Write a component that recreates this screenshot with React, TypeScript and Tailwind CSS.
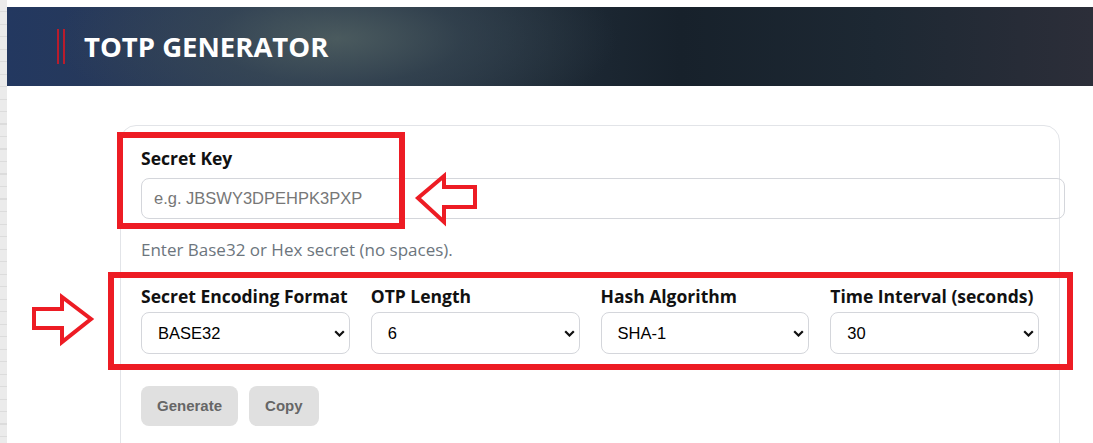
const selects = [
  { label: 'Secret Encoding Format', value: 'BASE32', options: ['BASE32', 'HEX'] },
  { label: 'OTP Length', value: '6', options: ['6', '7', '8'] },
  { label: 'Hash Algorithm', value: 'SHA-1', options: ['SHA-1', 'SHA-256', 'SHA-512'] },
  { label: 'Time Interval (seconds)', value: '30', options: ['30', '60'] },
]

function Chevron() {
  return (
    <svg width="11" height="7" viewBox="0 0 11 7" className="pointer-events-none absolute right-[5px] top-[18px]">
      <path d="M1.2 1.2 L5.5 5.5 L9.8 1.2" fill="none" stroke="#111" strokeWidth="2.2" />
    </svg>
  )
}

export default function App() {
  return (
    <div className="relative flex min-h-screen overflow-hidden bg-white font-['Open_Sans',sans-serif]">
      {/* grid strip on the left edge */}
      <div className="w-[7px] shrink-0 bg-[#ebebeb] bg-[repeating-linear-gradient(180deg,#ebebeb_0px,#ebebeb_11px,#dcdcdc_11px,#dcdcdc_12.5px)]" />

      <div className="flex-1 pt-[7px]">
        <header className="flex h-[79px] items-center pl-[50px] bg-[radial-gradient(ellipse_280px_100px_at_330px_40%,rgba(76,92,95,0.95)_0%,rgba(60,76,86,0.55)_45%,rgba(40,55,70,0)_100%),linear-gradient(90deg,#233860_0%,#27395a_10%,#2c3c52_25%,#1e2a36_50%,#17212b_62%,#1d2833_80%,#2c2e39_100%)]">
          <div className="flex h-[35px] gap-[4px]">
            <span className="w-[2px] bg-[#b91c2c]" />
            <span className="w-[2px] bg-[#b91c2c]" />
          </div>
          <h1 className="ml-[19px] text-[27.5px] font-bold leading-none text-white">TOTP GENERATOR</h1>
        </header>

        <div className="pl-[113px] pt-[39px]">
          <div className="w-[940px] rounded-2xl border border-[#e2e4e8] px-5 pb-10 pt-[19px]">
            <label className="block text-[17.5px] font-bold leading-[27px] text-[#111]">Secret Key</label>
            <input
              placeholder="e.g. JBSWY3DPEHPK3PXP"
              className="mt-[6px] box-content block h-[39px] w-full rounded-lg border border-[#d4d6db] px-3 font-['Liberation_Sans',Arial,sans-serif] text-[16.5px] placeholder:text-[#777]"
            />
            <p className="mt-[18px] text-[17px] leading-[26px] text-[#6c757d]">Enter Base32 or Hex secret (no spaces).</p>

            <div className="mt-[20px] grid grid-cols-4 gap-x-[21px]">
              {selects.map((s) => (
                <div key={s.label}>
                  <label className="block whitespace-nowrap text-[17.5px] font-bold leading-[27px] text-[#111]">{s.label}</label>
                  <div className="relative mt-[2px]">
                    <select
                      defaultValue={s.value}
                      className="block h-[42px] w-full appearance-none rounded-lg border border-[#d4d6db] bg-white pl-4 font-['Liberation_Sans',Arial,sans-serif] text-[16.5px] text-black"
                    >
                      {s.options.map((o) => (
                        <option key={o}>{o}</option>
                      ))}
                    </select>
                    <Chevron />
                  </div>
                </div>
              ))}
            </div>

            <div className="mt-[32px] flex gap-[11px] font-['Liberation_Sans',Arial,sans-serif]">
              <button className="h-[40px] rounded-lg bg-[#e0e0e0] px-4 text-[15px] font-bold text-[#666]">Generate</button>
              <button className="h-[40px] rounded-lg bg-[#e0e0e0] px-4 text-[15px] font-bold text-[#666]">Copy</button>
            </div>
          </div>
        </div>
      </div>

      {/* red annotations */}
      <div className="pointer-events-none absolute left-[117px] top-[132px] h-[97px] w-[288px] border-[6px] border-[#ed1c24]" />
      <div className="pointer-events-none absolute left-[108px] top-[272px] h-[98px] w-[965px] border-[6px] border-[#ed1c24]" />
      <svg className="pointer-events-none absolute left-[410px] top-[170px]" width="72" height="60" viewBox="0 0 72 60">
        <polygon points="8,28 34,6 34,17 65,17 65,37 34,37 34,52" fill="white" stroke="#ed1c24" strokeWidth="4" />
      </svg>
      <svg className="pointer-events-none absolute left-[25px] top-[290px]" width="75" height="60" viewBox="0 0 75 60">
        <polygon points="9,19 37,19 37,7 66,29 37,52 37,38 9,38" fill="white" stroke="#ed1c24" strokeWidth="4" />
      </svg>
    </div>
  )
}
